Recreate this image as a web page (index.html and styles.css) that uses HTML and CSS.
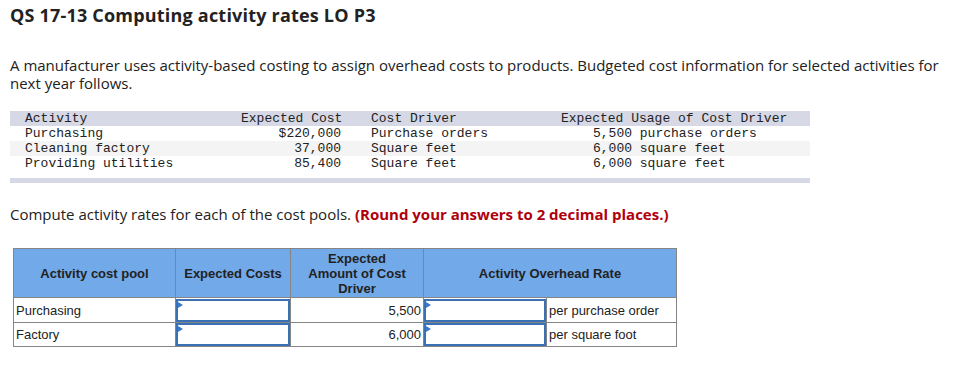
FILE: index.html
```html
<!DOCTYPE html>
<html>
<head>
<meta charset="utf-8">
<link rel="stylesheet" href="styles.css">
</head>
<body>
<h1 class="title">QS 17-13 Computing activity rates LO P3</h1>
<p class="intro">A manufacturer uses activity-based costing to assign overhead costs to products. Budgeted cost information for selected activities for next year follows.</p>

<div class="data">
  <div class="drow dhead">
    <span class="c1">Activity</span><span class="c2">Expected Cost</span><span class="c3">Cost Driver</span><span class="c4">Expected Usage of Cost Driver</span>
  </div>
  <div class="drow">
    <span class="c1">Purchasing</span><span class="c2">$220,000</span><span class="c3">Purchase orders</span><span class="c4 u">5,500 purchase orders</span>
  </div>
  <div class="drow alt">
    <span class="c1">Cleaning factory</span><span class="c2">37,000</span><span class="c3">Square feet</span><span class="c4 u">6,000 square feet</span>
  </div>
  <div class="drow">
    <span class="c1">Providing utilities</span><span class="c2">85,400</span><span class="c3">Square feet</span><span class="c4 u">6,000 square feet</span>
  </div>
  <div class="dfoot"></div>
</div>

<p class="ask">Compute activity rates for each of the cost pools. <strong class="red">(Round your answers to 2 decimal places.)</strong></p>

<table class="ans">
  <colgroup>
    <col class="w1"><col class="w2"><col class="w3"><col class="w4"><col class="w5">
  </colgroup>
  <thead>
    <tr class="hrow">
      <th>Activity cost pool</th>
      <th>Expected Costs</th>
      <th>Expected<br>Amount of Cost<br>Driver</th>
      <th colspan="2">Activity Overhead Rate</th>
    </tr>
  </thead>
  <tbody>
    <tr class="r1">
      <td>Purchasing</td>
      <td class="in"><div class="box"></div></td>
      <td class="num">5,500</td>
      <td class="in"><div class="box"></div></td>
      <td>per purchase order</td>
    </tr>
    <tr class="r2">
      <td>Factory</td>
      <td class="in"><div class="box"></div></td>
      <td class="num">6,000</td>
      <td class="in"><div class="box"></div></td>
      <td>per square foot</td>
    </tr>
  </tbody>
</table>
</body>
</html>
```

FILE: styles.css
```css
* { box-sizing: border-box; }
body {
  margin: 0;
  padding: 0 10px;
  font-family: "Open Sans", Lato, sans-serif;
  color: #222;
  background: #fff;
}
.title {
  margin: 0;
  padding-top: 3px;
  font-size: 18px;
  line-height: 24px;
  font-weight: 700;
  letter-spacing: 0.2px;
  color: #222;
}
.intro {
  margin: 29px 0 0 0;
  font-size: 15px;
  line-height: 18px;
  width: 945px;
}
.data {
  margin-top: 19px;
  width: 800px;
  font-family: "Liberation Mono", monospace;
  font-size: 13px;
  color: #222;
}
.drow {
  display: grid;
  grid-template-columns: 15px 216px 100px 30px 190px 1fr;
  height: 15px;
  line-height: 15px;
  white-space: pre;
}
.drow .c1 { grid-column: 2; }
.drow .c2 { grid-column: 3; text-align: right; }
.drow .c3 { grid-column: 5; }
.drow .c4 { grid-column: 6; }
.drow .u { padding-left: 32px; }
.dhead { background: #d6d9e5; }
.alt { background: #f4f4f4; }
.dfoot {
  margin-top: 7px;
  height: 5px;
  background: #d6d9e5;
}
.ask {
  margin: 22px 0 0 0;
  font-size: 15px;
  line-height: 18px;
}
.red { color: #b0000c; font-weight: 700; }
.ans {
  margin: 25px 0 0 3px;
  border-collapse: collapse;
  table-layout: fixed;
  width: 663px;
  font-family: "Liberation Sans", Arial, sans-serif;
  font-size: 13px;
  color: #222;
}
.w1 { width: 162px; }
.w2 { width: 115px; }
.w3 { width: 133px; }
.w4 { width: 123px; }
.w5 { width: 130px; }
.ans th, .ans td {
  border: 1px solid #858585;
  padding: 0 2px;
}
.hrow { height: 49px; }
.hrow th {
  background: #72a9e8;
  font-weight: 700;
  text-align: center;
  line-height: 15px;
}
.r1 { height: 25px; }
.r2 { height: 24px; }
.ans td { text-align: left; }
.ans td.num { text-align: right; }
.ans td.in { padding: 0; }
.box {
  position: relative;
  height: 23px;
  border: 2px solid #3a70b4;
  background: #fff;
}
.box::before {
  content: "";
  position: absolute;
  left: 0;
  top: 1px;
  border-left: 5px solid #3a78c8;
  border-top: 3px solid transparent;
  border-bottom: 3px solid transparent;
}
```
